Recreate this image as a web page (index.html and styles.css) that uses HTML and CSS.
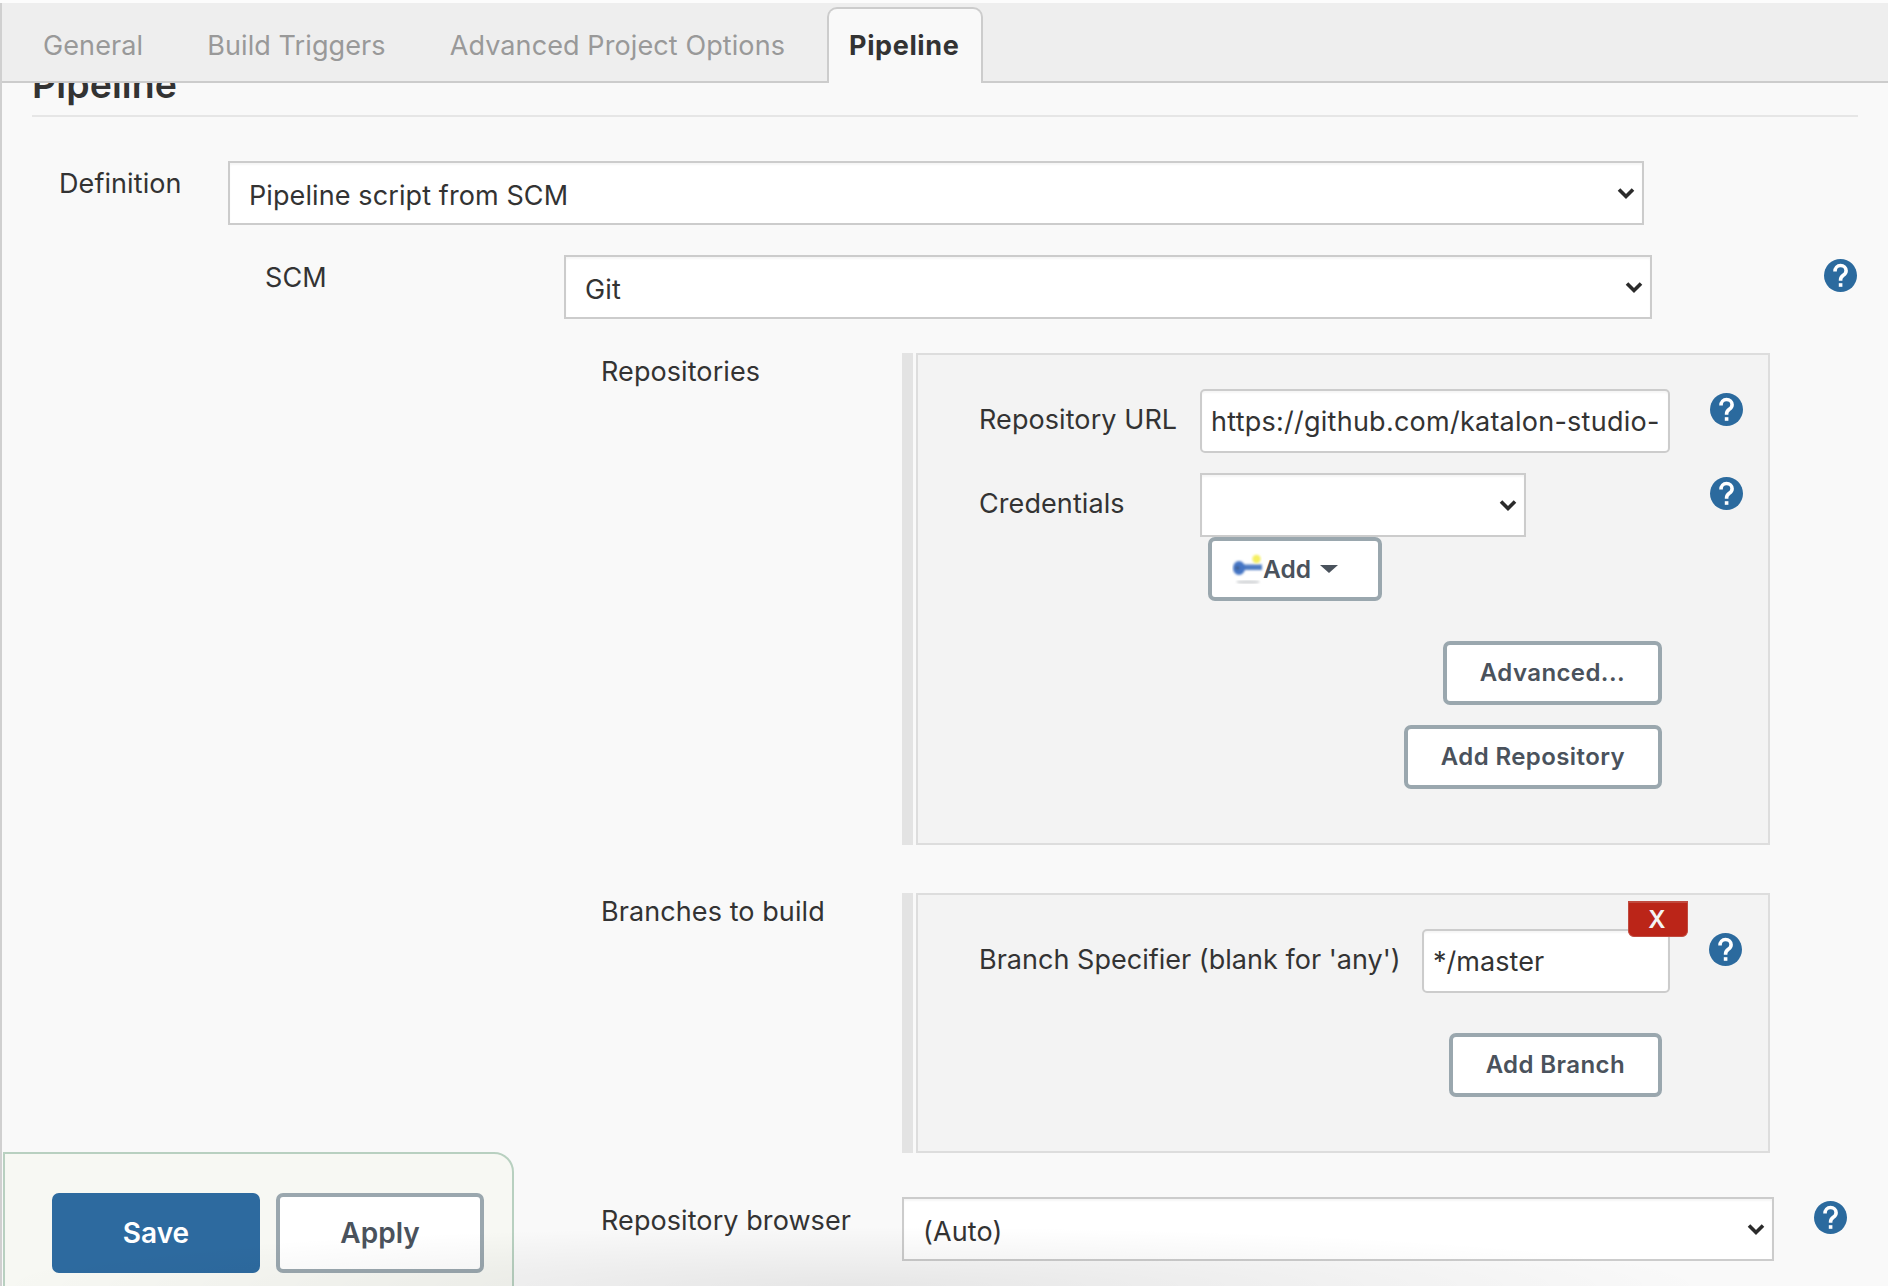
FILE: index.html
```html
<!DOCTYPE html>
<html lang="en">
<head>
<meta charset="utf-8">
<title>Pipeline configuration</title>
<link rel="stylesheet" href="styles.css">
</head>
<body>
<svg class="defs" width="0" height="0" aria-hidden="true">
  <symbol id="help" viewBox="0 0 33 33">
    <circle cx="16.5" cy="16.5" r="16.5" fill="#2b6a9e"/>
    <path d="M11 12.5c0-3.6 2.4-6 5.5-6 3.2 0 5.6 2.2 5.6 5.2 0 2.3-1.2 3.5-2.8 4.6-1.6 1.1-2.7 2-2.7 4.5v1" fill="none" stroke="#fff" stroke-width="3.6"/>
    <rect x="14.8" y="24.2" width="3.6" height="3.6" fill="#fff"/>
  </symbol>
  <symbol id="chev" viewBox="0 0 18 13">
    <path d="M2 2.5l7 7 7-7" fill="none" stroke="#2b2b2b" stroke-width="3.6"/>
  </symbol>
  <filter id="soft"><feGaussianBlur stdDeviation="0.8"/></filter>
</svg>
<div class="page">
  <nav class="tabs">
    <a class="tab">General</a>
    <a class="tab">Build Triggers</a>
    <a class="tab">Advanced Project Options</a>
    <a class="tab active">Pipeline</a>
  </nav>
  <main class="main">
    <h2 class="heading">Pipeline</h2>

    <div class="row row-def">
      <label class="lbl lbl-def">Definition</label>
      <div class="sel sel-def"><select><option>Pipeline script from SCM</option></select><svg class="chev"><use href="#chev"/></svg></div>
    </div>

    <div class="row row-scm">
      <label class="lbl lbl-scm">SCM</label>
      <div class="sel sel-scm"><select><option>Git</option></select><svg class="chev"><use href="#chev"/></svg></div>
      <svg class="help help-outer"><use href="#help"/></svg>
    </div>

    <div class="row row-block row-repo">
      <label class="lbl lbl-block">Repositories</label>
      <div class="bar"></div>
      <div class="box">
        <div class="row">
          <label class="lbl lbl-inner">Repository URL</label>
          <input class="txt txt-url" value="https://github.com/katalon-studio-samples/ci-samples.git">
          <svg class="help help-inner"><use href="#help"/></svg>
        </div>
        <div class="row row-cred">
          <label class="lbl lbl-inner">Credentials</label>
          <div class="sel sel-cred"><select><option></option></select><svg class="chev"><use href="#chev"/></svg></div>
          <svg class="help help-cred"><use href="#help"/></svg>
        </div>
        <button class="btn btn-add">
          <svg class="key" viewBox="0 0 32 32" width="32" height="32">
            <ellipse cx="16" cy="29" rx="12" ry="1.6" fill="#cfd1d4" filter="url(#soft)"/>
            <g filter="url(#soft)">
              <rect x="10" y="11.5" width="20" height="5.5" fill="#4f7cc2"/>
              <ellipse cx="7" cy="15" rx="6" ry="7" fill="#4475c4"/>
              <circle cx="5.5" cy="15" r="2" fill="#3f5f92"/>
            </g>
            <circle cx="24.5" cy="6" r="4.2" fill="#f5ef62" filter="url(#soft)"/>
          </svg>
          <span>Add</span>
          <i class="caret"></i>
        </button>
        <div class="actions actions-repo">
          <button class="btn">Advanced...</button>
          <button class="btn">Add Repository</button>
        </div>
      </div>
    </div>

    <div class="row row-block row-branch">
      <label class="lbl lbl-block">Branches to build</label>
      <div class="bar"></div>
      <div class="box">
        <button class="del">X</button>
        <div class="row">
          <label class="lbl lbl-inner lbl-branch">Branch Specifier (blank for 'any')</label>
          <input class="txt txt-branch" value="*/master">
          <svg class="help help-branch"><use href="#help"/></svg>
        </div>
        <div class="actions actions-branch">
          <button class="btn">Add Branch</button>
        </div>
      </div>
    </div>

    <div class="row row-block row-browser">
      <label class="lbl lbl-browser">Repository browser</label>
      <div class="sel sel-browser"><select><option>(Auto)</option></select><svg class="chev"><use href="#chev"/></svg></div>
      <svg class="help help-browser"><use href="#help"/></svg>
    </div>
  </main>
  <div class="savebar">
    <button class="btn btn-large btn-primary">Save</button>
    <button class="btn btn-large">Apply</button>
  </div>
</div>
</body>
</html>
```
FILE: styles.css
```css
* { box-sizing: border-box; }
html, body { margin: 0; height: 100%; background: #fcfcfc; }
body { font-family: Inter, "Liberation Sans", sans-serif; font-size: 27px; letter-spacing: .08px; color: #333; overflow: hidden; }
.defs { position: absolute; }
.page {
  position: relative;
  height: 1286px;
  margin-top: 3px;
  border-left: 2px solid #d0d0d0;
  background: #f9f9f9;
  overflow: hidden;
}
.page::after {
  content: "";
  position: absolute;
  left: 0;
  bottom: 3px;
  width: 1700px;
  height: 70px;
  background: radial-gradient(ellipse 860px 60px at 50% 100%, rgba(0,0,0,.075), rgba(0,0,0,0));
  pointer-events: none;
  z-index: 5;
}

.tabs {
  display: flex;
  align-items: flex-end;
  height: 80px;
  padding-left: 41px;
  gap: 64px;
  background: #eee;
  border-bottom: 2px solid #ccc;
  position: relative;
  z-index: 2;
}
.tab { line-height: 70px; letter-spacing: .1px; color: #999; }
.tab.active {
  margin: 0 0 -2px -22px;
  padding: 0 22px 0 20px;
  height: 76px;
  line-height: 74px;
  font-weight: 700;
  letter-spacing: .6px;
  color: #333;
  background: #f9f9f9;
  border: 2px solid #ccc;
  border-bottom: 0;
  border-radius: 10px 10px 0 0;
}

.main { display: block; }
.heading {
  margin: -19px 30px 0 30px;
  height: 53px;
  line-height: 42px;
  font-size: 37.5px;
  font-weight: 600;
  color: #333;
  border-bottom: 2px solid #e6e6e6;
}

.row { display: flex; align-items: flex-start; }
.lbl { display: block; line-height: 32px; flex: none; }
.row-def { margin: 44px 0 0 57px; }
.lbl-def { width: 169px; padding-top: 7px; height: 39px; }
.row-scm { margin: 30px 0 0 263px; }
.lbl-scm { width: 299px; padding-top: 7px; height: 39px; }
.row-block { margin-left: 599px; }
.row-repo { margin-top: 34px; }
.row-branch { margin-top: 48px; }
.row-browser { margin-top: 44px; }
.lbl-block { width: 301px; padding-top: 3px; }
.lbl-browser { width: 301px; padding-top: 8px; }
.bar { flex: none; align-self: stretch; width: 11px; background: #e3e3e3; }
.box {
  flex: none;
  position: relative;
  width: 854px;
  margin-left: 3px;
  padding: 34px 0 0 61px;
  background: #f3f3f3;
  border: 2px solid #ddd;
}
.row-repo .box { padding-bottom: 54px; }
.row-branch .box { padding-bottom: 54px; }
.lbl-inner { width: 221px; padding-top: 15px; }
.lbl-branch { white-space: nowrap; letter-spacing: .02px; }
.row-branch .lbl-branch { width: 443px; }
.row-cred { margin-top: 20px; }

.sel { position: relative; flex: none; height: 64px; }
.sel select {
  display: block;
  width: 100%;
  height: 64px;
  padding: 5px 40px 0 19px;
  appearance: none;
  font: inherit;
  letter-spacing: .1px;
  color: #333;
  background: #fff;
  border: 2px solid #ccc;
  border-radius: 0;
  box-shadow: inset 0 2px 2px rgba(0,0,0,.04);
}
.chev { position: absolute; right: 9px; top: 26px; width: 18px; height: 13px; pointer-events: none; }
.sel-def { width: 1416px; }
.sel-scm { width: 1088px; }
.sel-cred { width: 326px; }
.sel-browser { width: 872px; }

.txt {
  flex: none;
  height: 64px;
  padding: 1px 10px 0 9px;
  font: inherit;
  letter-spacing: .25px;
  color: #333;
  background: #fff;
  border: 2px solid #ccc;
  border-radius: 5px;
  box-shadow: inset 0 2px 2px rgba(0,0,0,.04);
}
.txt-url { width: 470px; }
.txt-branch { width: 248px; letter-spacing: .05px; }

.help { flex: none; width: 33px; height: 33px; }
.help-outer { margin: 4px 0 0 172px; }
.help-inner { margin: 4px 0 0 40px; }
.help-branch { margin: 4px 0 0 39px; }
.help-cred { margin: 4px 0 0 184px; }
.help-browser { margin: 4px 0 0 40px; }

.btn {
  display: inline-flex;
  align-items: center;
  justify-content: center;
  height: 64px;
  padding: 0 33px;
  font: 600 24px/1 Inter, "Liberation Sans", sans-serif;
  letter-spacing: .4px;
  color: #4a525c;
  background: #fff;
  border: 4px solid #9aa7ae;
  border-radius: 7px;
}
.btn-add {
  display: flex;
  justify-content: flex-start;
  width: 174px;
  margin-left: 229px;
  padding: 0 0 0 20px;
  letter-spacing: 0;
  font-size: 24.5px;
}
.key { flex: none; margin: 0 -1px 0 0; }
.caret {
  width: 0;
  height: 0;
  margin: 0 0 0 9px;
  border-left: 9px solid transparent;
  border-right: 9px solid transparent;
  border-top: 8px solid #4a525c;
}
.actions { display: flex; flex-direction: column; align-items: flex-end; gap: 20px; padding-right: 106px; }
.actions-repo { margin-top: 40px; }
.actions-branch { margin-top: 40px; }

.del {
  position: absolute;
  top: 6px;
  right: 80px;
  z-index: 1;
  width: 60px;
  height: 36px;
  padding: 0 2px 0 0;
  font: 600 24px/1 Inter, "Liberation Sans", sans-serif;
  color: #f4f4f4;
  background: #bb2518;
  border: 1px solid #c04a3e;
  border-top-width: 2px;
  border-radius: 0 0 6px 6px;
}

.savebar {
  position: absolute;
  left: 1px;
  top: 1149px;
  display: flex;
  gap: 16px;
  width: 511px;
  height: 140px;
  padding: 39px 0 0 47px;
  background: #f7f8f3;
  border: 2px solid #b8d0c0;
  border-radius: 0 20px 0 0;
  z-index: 3;
}
.btn-large { width: 208px; height: 80px; padding: 0; font-size: 28px; letter-spacing: 0; }
.btn-primary { color: #fff; background: #2d6a9f; border-color: #2d6a9f; }
```
